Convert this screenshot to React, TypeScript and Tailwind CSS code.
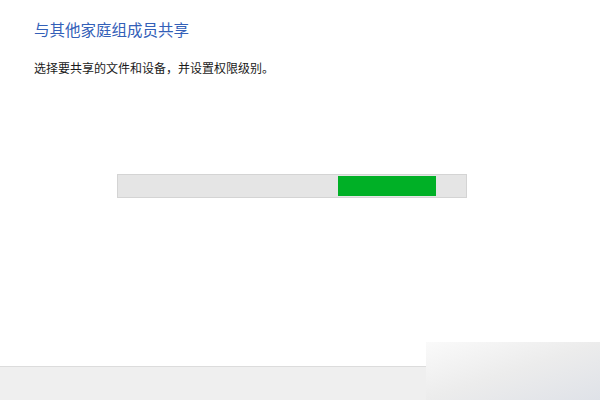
export default function App() {
  return (
    <main
      className="w-[600px] h-[400px] bg-white flex flex-col relative overflow-hidden"
      style={{ fontFamily: '"Noto Sans CJK SC", "Microsoft YaHei", sans-serif' }}
    >
      {/* 内容区 */}
      <div className="flex-1 flex flex-col px-[34px] pt-[18px]">
        <h1 className="text-[15.5px] leading-[22px] text-[#3360b8] font-normal">与其他家庭组成员共享</h1>
        <p className="mt-[19px] text-[12px] leading-[18px] text-[#1a1a1a]">
          选择要共享的文件和设备，并设置权限级别。
        </p>

        {/* 进度条 */}
        <div className="mt-[97px] ml-[83px] w-[350px] h-[24px] bg-[#e5e5e5] border border-[#d4d4d4] flex items-center">
          <div className="ml-[220px] w-[98px] h-[20px] bg-[#00b026]" />
        </div>
      </div>

      {/* 底栏 */}
      <div className="h-[34px] bg-[#efefef] border-t border-[#dcdcdc]" />

      {/* 水印遮挡 */}
      <div className="absolute left-[426px] top-[342px] w-[174px] h-[58px] bg-gradient-to-br from-[#fafafa] via-[#ececec] to-[#dfe2e8]" />
    </main>
  )
}
